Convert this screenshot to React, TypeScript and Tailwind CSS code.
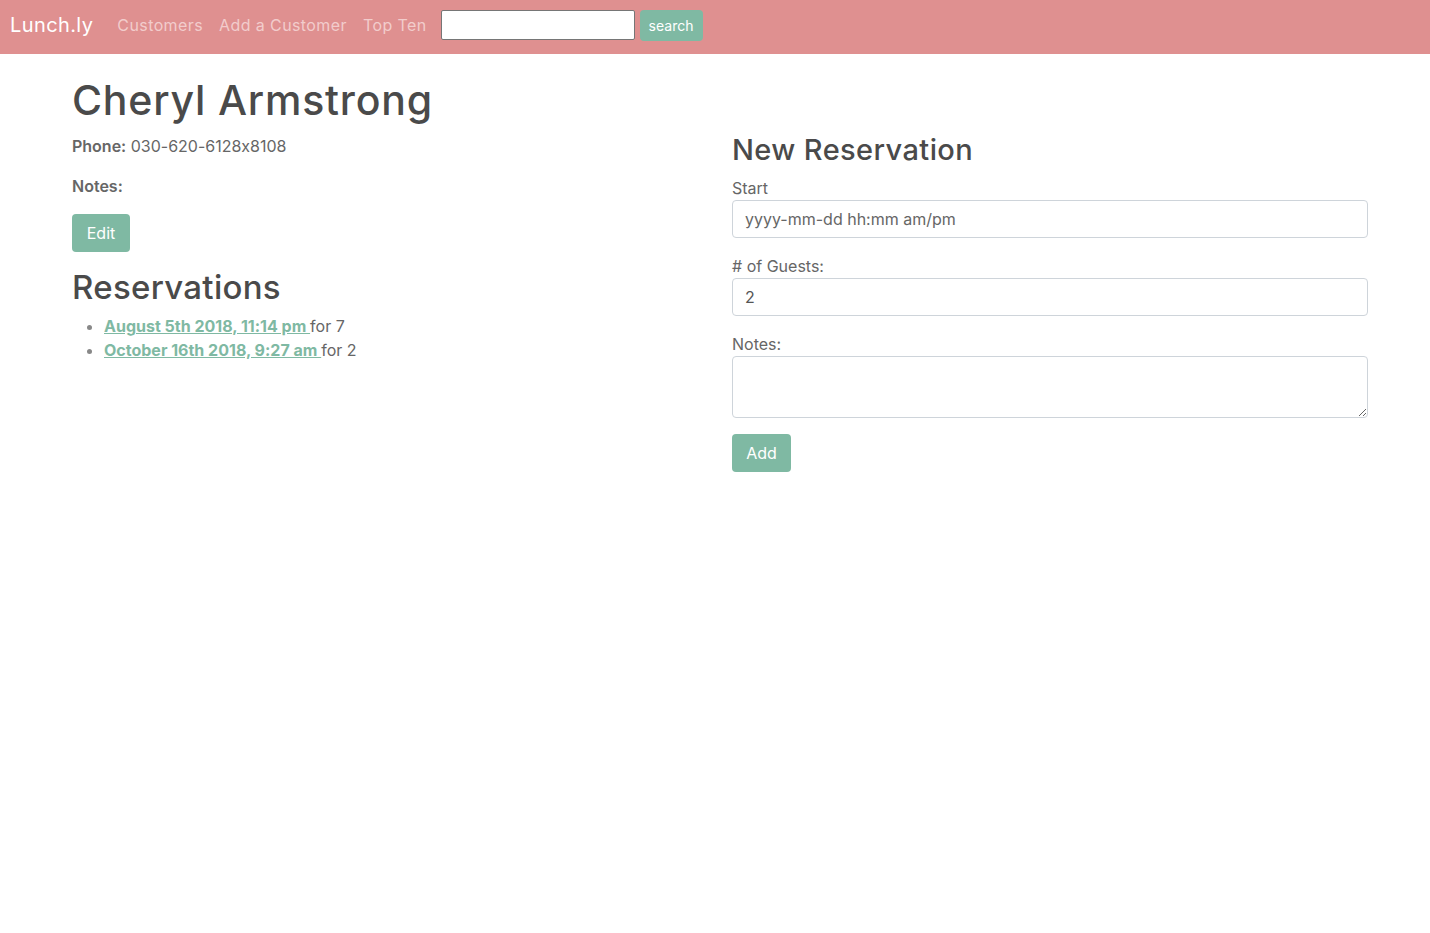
import React from "react";

const heading = { fontFamily: "Inter, 'Noto Sans', sans-serif" };
const body = { fontFamily: "Inter, 'Liberation Sans', sans-serif" };

export default function App() {
  return (
    <div className="min-h-[933px] bg-white text-[#666] [font-feature-settings:'calt'_0]" style={body}>
      {/* Navbar */}
      <nav className="h-[54px] bg-[#df9090] flex items-center px-[10px] pb-[4px]" style={heading}>
        <span className="text-white text-[20px] tracking-[0.4px] mr-[24px]">Lunch.ly</span>
        <a className="text-[16px] tracking-[0.4px] text-[#f2cccc] mr-[16px]">Customers</a>
        <a className="text-[16px] tracking-[0.4px] text-[#f2cccc] mr-[16px]">Add a Customer</a>
        <a className="text-[16px] tracking-[0.4px] text-[#f2cccc] mr-[14px]">Top Ten</a>
        <input className="w-[194px] h-[30px] bg-white border border-[#767676] rounded-[2px] mr-[5px]" />
        <button className="h-[31px] w-[63px] bg-[#7fb9a3] text-white text-[14px] rounded-[4px]">search</button>
      </nav>

      <div className="grid grid-cols-[630px_636px] gap-[30px] pl-[72px]">
        {/* Left */}
        <div>
          <h1
            className="text-[41px] leading-[48px] tracking-[0.8px] text-[#4a4a4a] font-medium mt-[22px] mb-[10px]"
            style={heading}
          >
            Cheryl Armstrong
          </h1>
          <p className="text-[16px] leading-[24px] mb-[16px]">
            <b className="font-semibold">Phone:</b> 030-620-6128x8108
          </p>
          <p className="text-[16px] leading-[24px] mb-[16px]">
            <b className="font-semibold">Notes:</b>
          </p>
          <button className="h-[38px] w-[58px] bg-[#7fb9a3] text-white text-[16px] rounded-[4px]" style={heading}>
            Edit
          </button>
          <h2
            className="text-[33px] leading-[38px] tracking-[0.3px] text-[#4a4a4a] font-medium mt-[16px] mb-[8px]"
            style={heading}
          >
            Reservations
          </h2>
          <ul className="list-disc pl-[32px] text-[16px] leading-[24px] marker:text-[#888]">
            <li>
              <a className="font-bold text-[#7fb9a3] underline">August 5th 2018, 11:14 pm </a>for 7
            </li>
            <li>
              <a className="font-bold text-[#7fb9a3] underline">October 16th 2018, 9:27 am </a>for 2
            </li>
          </ul>
        </div>

        {/* Right */}
        <div className="pt-[79px]">
          <h3
            className="text-[29px] leading-[34px] tracking-[0.4px] text-[#4a4a4a] font-medium mb-[9px]"
            style={heading}
          >
            New Reservation
          </h3>
          <label className="block text-[16px] leading-[24px]">Start</label>
          <input
            placeholder="yyyy-mm-dd hh:mm am/pm"
            className="block w-full h-[38px] px-[12px] border border-[#ced4da] rounded-[4px] text-[16px] placeholder:text-[#666] mb-[16px]"
          />
          <label className="block text-[16px] leading-[24px]"># of Guests:</label>
          <input
            defaultValue="2"
            className="block w-full h-[38px] px-[12px] border border-[#ced4da] rounded-[4px] text-[16px] text-[#555] mb-[16px]"
          />
          <label className="block text-[16px] leading-[24px]">Notes:</label>
          <textarea className="block w-full h-[62px] px-[12px] border border-[#ced4da] rounded-[4px] mb-[16px]" />
          <button className="h-[38px] w-[59px] bg-[#7fb9a3] text-white text-[16px] rounded-[4px]" style={heading}>
            Add
          </button>
        </div>
      </div>
    </div>
  );
}
